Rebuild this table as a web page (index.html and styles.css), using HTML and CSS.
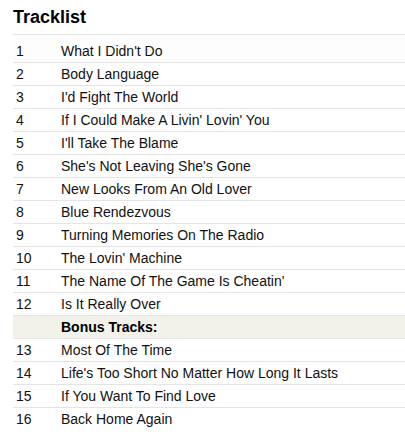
FILE: index.html
```html
<!doctype html>
<html>

<head>
   <meta charset="utf-8">
   <title>Tracklist</title>
   <link rel="stylesheet" href="styles.css">
</head>

<body>
   <div class="tracklist">
      <h2 class="title">Tracklist</h2>
      <div class="tracks">
         <div class="track first"><span class="num">1</span><span class="name">What I Didn't Do</span></div>
         <div class="track"><span class="num">2</span><span class="name">Body Language</span></div>
         <div class="track"><span class="num">3</span><span class="name">I'd Fight The World</span></div>
         <div class="track"><span class="num">4</span><span class="name">If I Could Make A Livin' Lovin' You</span></div>
         <div class="track"><span class="num">5</span><span class="name">I'll Take The Blame</span></div>
         <div class="track"><span class="num">6</span><span class="name">She's Not Leaving She's Gone</span></div>
         <div class="track"><span class="num">7</span><span class="name">New Looks From An Old Lover</span></div>
         <div class="track"><span class="num">8</span><span class="name">Blue Rendezvous</span></div>
         <div class="track"><span class="num">9</span><span class="name">Turning Memories On The Radio</span></div>
         <div class="track"><span class="num">10</span><span class="name">The Lovin' Machine</span></div>
         <div class="track"><span class="num">11</span><span class="name">The Name Of The Game Is Cheatin'</span></div>
         <div class="track"><span class="num">12</span><span class="name">Is It Really Over</span></div>
         <div class="track section"><span class="num"></span><span class="name">Bonus Tracks:</span></div>
         <div class="track"><span class="num">13</span><span class="name">Most Of The Time</span></div>
         <div class="track"><span class="num">14</span><span class="name">Life's Too Short No Matter How Long It Lasts</span></div>
         <div class="track"><span class="num">15</span><span class="name">If You Want To Find Love</span></div>
         <div class="track last"><span class="num">16</span><span class="name">Back Home Again</span></div>
      </div>
   </div>
</body>

</html>
```

FILE: styles.css
```css
html,
body {
   margin: 0;
   padding: 0;
   background: #fff;
   font-family: "Liberation Sans", Arial, sans-serif;
   color: #111;
}

.tracklist {
   padding: 0 0 0 13px;
}

.title {
   margin: 0;
   padding: 7px 0 6px 0;
   font-size: 18px;
   font-weight: bold;
   line-height: 21px;
   color: #000;
   border-bottom: 1px solid #e4e4e4;
}

.tracks {
   display: flex;
   flex-direction: column;
}

.track {
   display: grid;
   grid-template-columns: 48px 1fr;
   height: 22px;
   align-items: center;
   font-size: 14px;
   border-bottom: 1px solid #e4e4e4;
}

.track.first {
   box-sizing: border-box;
   height: 28px;
   padding-top: 4px;
   background: #fdfdfd;
}

.track.last {
   border-bottom: none;
}

.track .num {
   padding-left: 3px;
}

.track.section {
   background: #f2f1ea;
   font-weight: bold;
   color: #000;
}
```
